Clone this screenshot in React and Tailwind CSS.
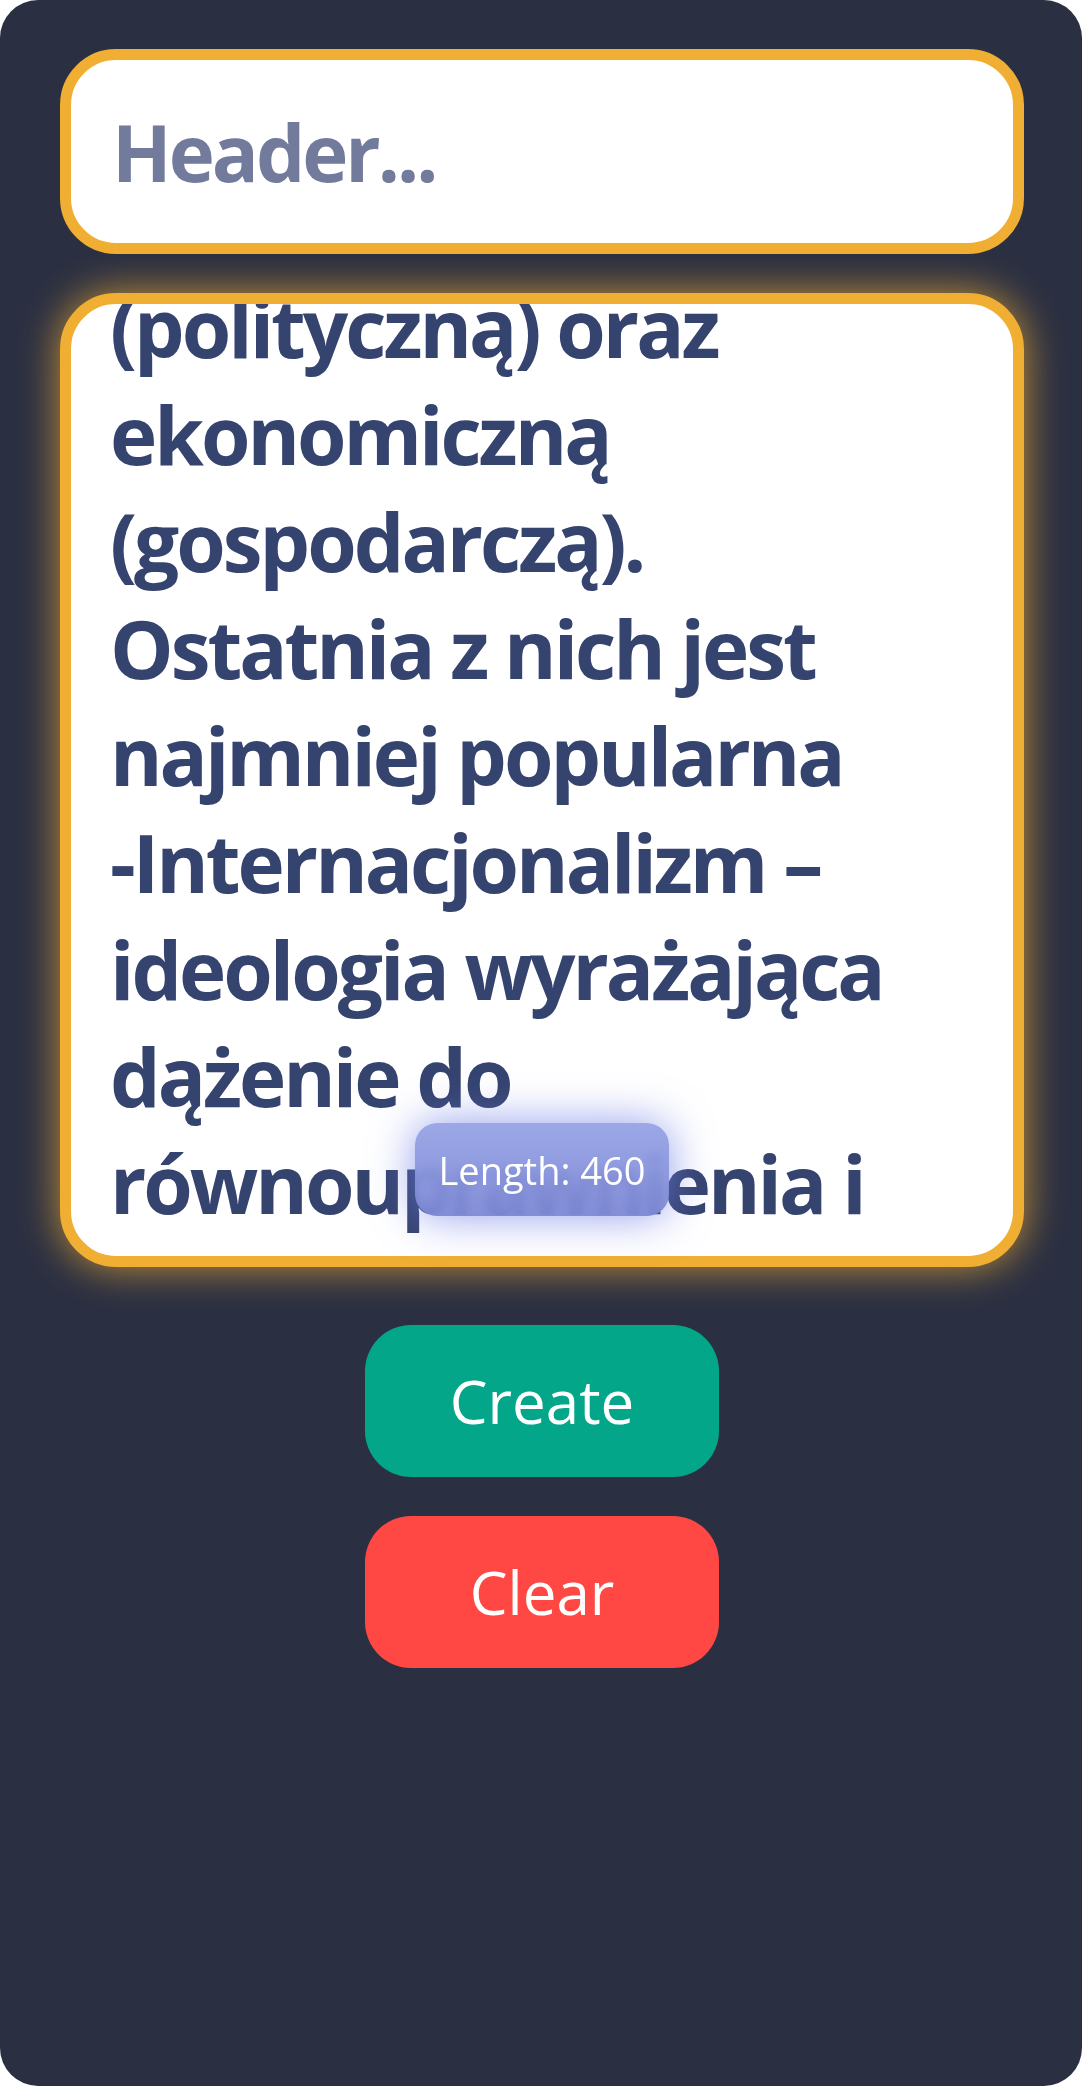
const LINES = [
  "(polityczną) oraz",
  "ekonomiczną",
  "(gospodarczą).",
  "Ostatnia z nich jest",
  "najmniej popularna",
  "-Internacjonalizm –",
  "ideologia wyrażająca",
  "dążenie do",
  "równouprawnienia i",
];

const FONT = { fontFamily: "'Open Sans', 'DejaVu Sans', sans-serif" };

export default function App() {
  return (
    <div className="w-[1082px] h-[2086px] bg-white">
      <div
        className="w-full h-full bg-[#2a2f42] rounded-[38px] overflow-hidden pt-[49px] pl-[60px] pr-[58px] flex flex-col"
        style={FONT}
      >
        {/* header input */}
        <div className="h-[205px] bg-white border-[11px] border-[#f0ae32] rounded-[56px] flex items-center pl-[41px]">
          <span className="text-[78px] font-bold text-[#737b9c] tracking-[-3px] leading-none">Header...</span>
        </div>

        {/* body textarea */}
        <div className="relative mt-[39px] h-[974px] bg-white border-[11px] border-[#f0ae32] rounded-[56px] shadow-[0_0_40px_rgba(240,174,50,0.8)]">
          <div className="absolute inset-0 overflow-hidden rounded-[45px]">
            <div className="mt-[-31px] pl-[39px] text-[80px] font-bold leading-[107px] text-[#35436f] tracking-[-3px]">
              {LINES.map((l) => (
                <div key={l} className="whitespace-nowrap">{l}</div>
              ))}
            </div>
          </div>

          {/* length badge */}
          <div className="absolute left-1/2 -translate-x-1/2 top-[819px] w-[254px] h-[93px] rounded-[22px] bg-gradient-to-b from-[#95a1e5ee] to-[#7b87d5ee] backdrop-blur-[6px] shadow-[0_0_44px_rgba(110,125,230,0.75)] flex items-center justify-center">
            <span className="text-[38px] text-white leading-none">Length: 460</span>
          </div>
        </div>

        {/* buttons */}
        <div className="flex flex-col items-center gap-[39px] mt-[58px]">
          <button className="w-[354px] h-[152px] rounded-[46px] bg-[#03a688] text-white text-[60px] font-medium">
            Create
          </button>
          <button className="w-[354px] h-[152px] rounded-[46px] bg-[#ff4843] text-white text-[60px] font-medium">
            Clear
          </button>
        </div>
      </div>
    </div>
  );
}
